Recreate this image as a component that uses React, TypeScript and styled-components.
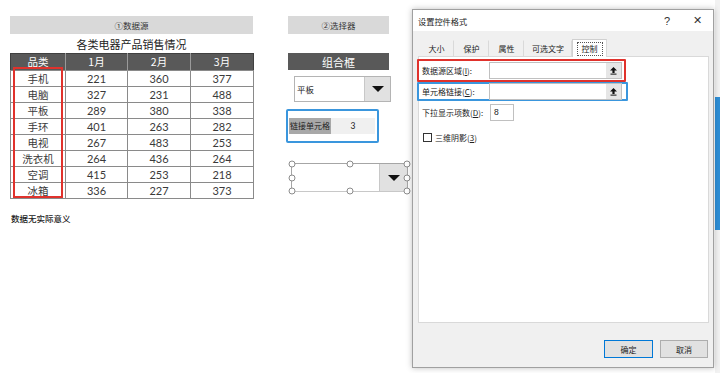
import React from "react";
import styled, { createGlobalStyle } from "styled-components";

const GlobalStyle = createGlobalStyle`
  html, body { margin: 0; padding: 0; background: #ffffff; }
  body { font-family: "Noto Sans CJK SC", "Noto Sans", sans-serif; color: #222; }
  * { box-sizing: border-box; }
`;

const Page = styled.div`
  position: relative;
  width: 720px;
  height: 373px;
  overflow: hidden;
  background: #fff;
`;

const Sheet = styled.div`
  display: flex;
  align-items: flex-start;
  gap: 35px;
  padding: 16px 0 0 10px;
`;

const SourceColumn = styled.div`
  width: 243px;
  display: flex;
  flex-direction: column;
`;

const SelectorColumn = styled.div`
  width: 101px;
  display: flex;
  flex-direction: column;
  align-items: flex-start;
`;

const SectionBar = styled.div`
  width: 100%;
  height: 18px;
  background: #d9d9d9;
  display: flex;
  align-items: center;
  justify-content: center;
  font-size: 8.5px;
  color: #333;
`;

const TableTitle = styled.div`
  height: 19px;
  display: flex;
  align-items: center;
  justify-content: center;
  font-size: 11px;
  color: #222;
`;

const TableWrap = styled.div`
  position: relative;
`;

const DataTable = styled.table`
  border-collapse: collapse;
  width: 243px;
  table-layout: fixed;
  border: 1px solid #404040;
`;

const HeadCell = styled.th<{ $w: number }>`
  width: ${(p) => p.$w}px;
  height: 16px;
  padding: 0;
  background: #595959;
  color: #fff;
  font-weight: 400;
  font-size: 10.5px;
  line-height: 16px;
  text-align: center;
  border-right: 1px solid #9a9a9a;
  &:last-child { border-right: none; }
`;

const Cell = styled.td<{ $cjk?: boolean }>`
  height: 16px;
  padding: 0;
  font-family: ${(p) => (p.$cjk ? `"Noto Sans CJK SC", sans-serif` : `Lato, "Noto Sans", sans-serif`)};
  font-size: ${(p) => (p.$cjk ? "10.5px" : "11px")};
  line-height: 15px;
  text-align: center;
  color: #3a3a3a;
  border: 1px solid #8a8a8a;
`;

const RedHighlight = styled.div`
  position: absolute;
  left: 3px;
  top: 14px;
  width: 50px;
  height: 131px;
  border: 2px solid #e0322c;
  pointer-events: none;
`;

const Note = styled.div`
  margin-top: 13px;
  margin-left: 1px;
  font-size: 8.5px;
  font-weight: 500;
  color: #222;
`;

const DarkBar = styled.div`
  margin-top: 19px;
  width: 101px;
  height: 17px;
  background: #595959;
  color: #fff;
  font-size: 11px;
  display: flex;
  align-items: center;
  justify-content: center;
`;

const ComboBox = styled.div`
  margin-top: 6px;
  margin-left: 6px;
  width: 97px;
  height: 26px;
  border: 1px solid #b4b4b4;
  display: flex;
  background: #fff;
`;

const ComboText = styled.div`
  flex: 1;
  display: flex;
  align-items: center;
  padding-left: 2px;
  font-size: 8.5px;
  color: #222;
`;

const DropButton = styled.div<{ $w: number }>`
  width: ${(p) => p.$w}px;
  background: #e1e1e1;
  border-left: 1px solid #c8c8c8;
  display: flex;
  align-items: center;
  justify-content: center;
`;

const Triangle = styled.div`
  width: 0;
  height: 0;
  border-left: 6px solid transparent;
  border-right: 6px solid transparent;
  border-top: 6px solid #111;
`;

const LinkBox = styled.div`
  margin-top: 7px;
  margin-left: -2px;
  width: 93px;
  height: 34px;
  border: 2px solid #3a96dd;
  border-radius: 2px;
  padding: 7px 0 0 1px;
  display: flex;
  align-items: flex-start;
`;

const LinkLabel = styled.div`
  width: 42px;
  height: 16px;
  background: #a8a8a8;
  font-size: 8px;
  line-height: 16px;
  color: #222;
  padding-left: 1px;
`;

const LinkValue = styled.div`
  width: 44px;
  height: 16px;
  background: #f0f0f0;
  font-family: Lato, sans-serif;
  font-size: 8.5px;
  line-height: 16px;
  text-align: center;
  color: #222;
`;

const SelectedCombo = styled.div`
  position: relative;
  margin-top: 20px;
  margin-left: 3px;
  width: 117px;
  height: 29px;
  border: 1px solid #a6a6a6;
  border-bottom-color: #c8c8c8;
  display: flex;
  justify-content: flex-end;
`;

const Handle = styled.span`
  position: absolute;
  width: 7px;
  height: 7px;
  border-radius: 50%;
  background: #fff;
  border: 1px solid #8c8c8c;
  transform: translate(-50%, -50%);
`;

/* Dialog */
const Dialog = styled.div`
  position: absolute;
  left: 412px;
  top: 9px;
  width: 302px;
  height: 359px;
  background: #f0f0f0;
  border: 1px solid #a0a0a0;
  box-shadow: 0 0 6px rgba(0, 0, 0, 0.25);
  display: flex;
  flex-direction: column;
`;

const TitleBar = styled.div`
  height: 21px;
  background: #fff;
  display: flex;
  align-items: center;
  padding: 0 8px 0 5px;
  font-size: 8.2px;
  color: #222;
`;

const TitleText = styled.div`
  flex: 1;
`;

const TitleIcon = styled.div<{ $w: number; $gap?: number }>`
  width: ${(p) => p.$w}px;
  margin-right: ${(p) => p.$gap ?? 0}px;
  text-align: center;
  font-family: "Liberation Sans", sans-serif;
  font-size: 11px;
  color: #333;
`;

const TabRow = styled.div`
  margin-top: 7px;
  padding-left: 6px;
  height: 18px;
  display: flex;
  align-items: flex-end;
`;

const Tab = styled.div<{ $w: number; $active?: boolean }>`
  width: ${(p) => p.$w}px;
  height: ${(p) => (p.$active ? 18 : 16)}px;
  display: flex;
  align-items: center;
  justify-content: center;
  font-size: 8px;
  color: #222;
  background: ${(p) => (p.$active ? "#fff" : "#f0f0f0")};
  border: 1px solid ${(p) => (p.$active ? "#d0d0d0" : "#f0f0f0")};
  border-right-color: #d9d9d9;
  border-bottom: none;
  margin-bottom: ${(p) => (p.$active ? -1 : 0)}px;
  position: relative;
  z-index: ${(p) => (p.$active ? 1 : 0)};
`;

const FocusRect = styled.span`
  border: 1px dotted #555;
  padding: 0 4px;
  line-height: 12px;
`;

const Panel = styled.div`
  margin: 0 4px 0 5px;
  height: 267px;
  background: #fff;
  border: 1px solid #d9d9d9;
  padding: 2px 0 0 0;
  display: flex;
  flex-direction: column;
  align-items: flex-start;
`;

const FieldFrame = styled.div<{ $color: string; $w: number; $h: number }>`
  margin-left: -2px;
  width: ${(p) => p.$w}px;
  height: ${(p) => p.$h}px;
  border: 2px solid ${(p) => p.$color};
  border-radius: 1px;
  display: flex;
  align-items: center;
  padding-left: 3px;
`;

const FieldRow = styled.div`
  display: flex;
  align-items: center;
  padding-left: 3px;
`;

const Label = styled.div<{ $w: number }>`
  width: ${(p) => p.$w}px;
  font-size: 8px;
  color: #222;
  white-space: nowrap;
  u { text-decoration: underline; }
`;

const RefInput = styled.div`
  width: 133px;
  height: 17px;
  background: #fff;
  border: 1px solid #c0c0c0;
  display: flex;
  justify-content: flex-end;
`;

const RefButton = styled.div`
  width: 15px;
  height: 15px;
  background: #e6e6e6;
  display: flex;
  align-items: center;
  justify-content: center;
`;

const NumInput = styled.div`
  width: 24px;
  height: 17px;
  border: 1px solid #c0c0c0;
  background: #fff;
  font-family: "Liberation Sans", sans-serif;
  font-size: 8.5px;
  line-height: 15px;
  padding-left: 3px;
`;

const CheckRow = styled.div`
  margin-top: 11px;
  padding-left: 4px;
  display: flex;
  align-items: center;
  gap: 3px;
  font-size: 8px;
  color: #222;
`;

const CheckBox = styled.span`
  width: 9px;
  height: 9px;
  border: 1px solid #333;
  background: #fff;
`;

const ButtonRow = styled.div`
  margin-top: 17px;
  padding-right: 5px;
  display: flex;
  justify-content: flex-end;
  gap: 7px;
`;

const DialogButton = styled.div<{ $primary?: boolean }>`
  width: ${(p) => (p.$primary ? 49 : 48)}px;
  height: 18px;
  background: #e1e1e1;
  border: 1px solid ${(p) => (p.$primary ? "#0078d7" : "#adadad")};
  font-size: 8px;
  display: flex;
  align-items: center;
  justify-content: center;
  color: #222;
`;

const BehindStrip = styled.div`
  position: absolute;
  right: 0;
  top: 0;
  width: 5px;
  height: 373px;
  background: #f2f2f2;
  display: flex;
  flex-direction: column;
`;

const BehindBlue = styled.div`
  margin-top: 97px;
  height: 133px;
  background: #2e8fd6;
`;

const UpArrow = () => (
  <svg width="9" height="9" viewBox="0 0 9 9">
    <path d="M4.5 1 L8 4.5 L5.6 4.5 L5.6 7 L3.4 7 L3.4 4.5 L1 4.5 Z" fill="#111" />
    <rect x="1.5" y="7.6" width="6" height="1" fill="#111" />
  </svg>
);

const rows: [string, number, number, number][] = [
  ["手机", 221, 360, 377],
  ["电脑", 327, 231, 488],
  ["平板", 289, 380, 338],
  ["手环", 401, 263, 282],
  ["电视", 267, 483, 253],
  ["洗衣机", 264, 436, 264],
  ["空调", 415, 253, 218],
  ["冰箱", 336, 227, 373],
];

const handles: [string, string][] = [
  ["0%", "0%"], ["50%", "0%"], ["100%", "0%"],
  ["0%", "50%"], ["100%", "50%"],
  ["0%", "100%"], ["50%", "100%"], ["100%", "100%"],
];

export default function App() {
  return (
    <Page>
      <GlobalStyle />
      <Sheet>
        <SourceColumn>
          <SectionBar>①数据源</SectionBar>
          <TableTitle>各类电器产品销售情况</TableTitle>
          <TableWrap>
            <DataTable>
              <thead>
                <tr>
                  <HeadCell $w={55}>品类</HeadCell>
                  <HeadCell $w={62}>1月</HeadCell>
                  <HeadCell $w={63}>2月</HeadCell>
                  <HeadCell $w={63}>3月</HeadCell>
                </tr>
              </thead>
              <tbody>
                {rows.map((r) => (
                  <tr key={r[0]}>
                    <Cell $cjk>{r[0]}</Cell>
                    <Cell>{r[1]}</Cell>
                    <Cell>{r[2]}</Cell>
                    <Cell>{r[3]}</Cell>
                  </tr>
                ))}
              </tbody>
            </DataTable>
            <RedHighlight />
          </TableWrap>
          <Note>数据无实际意义</Note>
        </SourceColumn>

        <SelectorColumn>
          <SectionBar>②选择器</SectionBar>
          <DarkBar>组合框</DarkBar>
          <ComboBox>
            <ComboText>平板</ComboText>
            <DropButton $w={26}>
              <Triangle />
            </DropButton>
          </ComboBox>
          <LinkBox>
            <LinkLabel>链接单元格</LinkLabel>
            <LinkValue>3</LinkValue>
          </LinkBox>
          <SelectedCombo>
            <DropButton $w={28}>
              <Triangle />
            </DropButton>
            {handles.map(([x, y]) => (
              <Handle key={x + y} style={{ left: x, top: y }} />
            ))}
          </SelectedCombo>
        </SelectorColumn>
      </Sheet>

      <BehindStrip>
        <BehindBlue />
      </BehindStrip>

      <Dialog>
        <TitleBar>
          <TitleText>设置控件格式</TitleText>
          <TitleIcon $w={14} $gap={15}>?</TitleIcon>
          <TitleIcon $w={16}>✕</TitleIcon>
        </TitleBar>
        <TabRow>
          <Tab $w={35}>大小</Tab>
          <Tab $w={35}>保护</Tab>
          <Tab $w={35}>属性</Tab>
          <Tab $w={48}>可选文字</Tab>
          <Tab $w={35} $active>
            <FocusRect>控制</FocusRect>
          </Tab>
        </TabRow>
        <Panel>
          <FieldFrame $color="#e0322c" $w={209} $h={23}>
            <Label $w={67}>
              数据源区域(<u>I</u>):
            </Label>
            <RefInput>
              <RefButton>
                <UpArrow />
              </RefButton>
            </RefInput>
          </FieldFrame>
          <FieldFrame $color="#3a96dd" $w={211} $h={19}>
            <Label $w={67}>
              单元格链接(<u>C</u>):
            </Label>
            <RefInput>
              <RefButton>
                <UpArrow />
              </RefButton>
            </RefInput>
          </FieldFrame>
          <FieldRow style={{ marginTop: 3 }}>
            <Label $w={68}>
              下拉显示项数(<u>D</u>):
            </Label>
            <NumInput>8</NumInput>
          </FieldRow>
          <CheckRow>
            <CheckBox />
            <span>
              三维阴影(<u>3</u>)
            </span>
          </CheckRow>
        </Panel>
        <ButtonRow>
          <DialogButton $primary>确定</DialogButton>
          <DialogButton>取消</DialogButton>
        </ButtonRow>
      </Dialog>
    </Page>
  );
}
